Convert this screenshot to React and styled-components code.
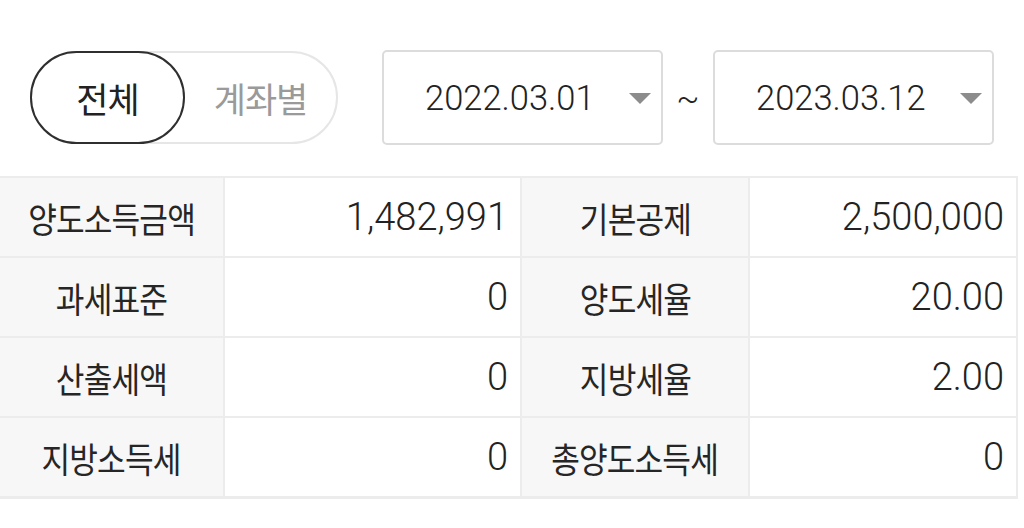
import React, { useState } from "react";
import styled, { createGlobalStyle } from "styled-components";

const Global = createGlobalStyle`
  html, body { margin: 0; padding: 0; background: #fff; }
  body { font-family: "Noto Sans CJK KR", "Noto Sans", sans-serif; color: #2b2b2b; }
  * { box-sizing: border-box; }
`;

const Page = styled.div`
  width: 1024px;
  height: 528px;
  background: #fff;
  padding-top: 50px;
`;

const TopBar = styled.div`
  display: flex;
  align-items: center;
  padding: 0 30px;
  height: 95px;
`;

const Toggle = styled.div`
  display: flex;
  width: 308px;
  height: 93px;
  border: 2px solid #e6e6e6;
  border-radius: 47px;
  margin-right: 44px;
`;

const ToggleItem = styled.button`
  flex: ${(p) => (p.$active ? "0 0 155px" : "1")};
  height: 93px;
  margin: -2px ${(p) => (p.$active ? "0" : "-2px")} -2px ${(p) => (p.$active ? "-2px" : "0")};
  border: ${(p) => (p.$active ? "2.5px solid #2f2f2f" : "none")};
  border-radius: 47px;
  background: ${(p) => (p.$active ? "#fff" : "transparent")};
  color: ${(p) => (p.$active ? "#222" : "#9a9a9a")};
  font-family: "Noto Sans CJK KR", sans-serif;
  font-size: 35px;
  font-weight: 400;
  padding: 0;
  padding-right: ${(p) => (p.$active ? "0" : "2px")};
  cursor: pointer;
  letter-spacing: -1px;
`;

const DateBox = styled.div`
  position: relative;
  width: 281px;
  height: 95px;
  border: 2px solid #dcdcdc;
  border-radius: 5px;
  display: flex;
  align-items: center;
  padding-left: 41px;
`;

const DateText = styled.span`
  font-family: "Roboto", sans-serif;
  font-size: 34.5px;
  font-weight: 300;
  color: #222;
`;

const Caret = styled.span`
  position: absolute;
  right: 10px;
  top: 41px;
  width: 0;
  height: 0;
  border-left: 11px solid transparent;
  border-right: 11px solid transparent;
  border-top: 11px solid #8c8c8c;
`;

const Tilde = styled.span`
  width: 50px;
  text-align: center;
  font-family: "Roboto", sans-serif;
  font-size: 34px;
  font-weight: 300;
  color: #222;
`;

const Table = styled.div`
  margin-top: 31px;
  width: 1018px;
  display: grid;
  grid-template-columns: 223px 295px 226px 266px;
  grid-auto-rows: 78px;
  gap: 2px;
  background: #ececec;
  padding: 2px 2px 3px 0;
`;

const LabelCell = styled.div`
  background: #f7f7f7;
  display: flex;
  align-items: center;
  justify-content: center;
  overflow: hidden;
`;

const LabelText = styled.span`
  display: inline-block;
  font-family: "Noto Sans CJK KR", sans-serif;
  font-size: 35px;
  color: #262626;
  letter-spacing: -1px;
  transform: scaleX(0.89);
  white-space: nowrap;
`;

const ValueCell = styled.div`
  background: #fff;
  display: flex;
  align-items: center;
  justify-content: flex-end;
  padding-right: 12px;
  font-family: "Roboto", sans-serif;
  font-size: 38px;
  font-weight: 300;
  color: #222;
`;

const rows = [
  ["양도소득금액", "1,482,991", "기본공제", "2,500,000"],
  ["과세표준", "0", "양도세율", "20.00"],
  ["산출세액", "0", "지방세율", "2.00"],
  ["지방소득세", "0", "총양도소득세", "0"],
];

export default function App() {
  const [mode, setMode] = useState("all");
  return (
    <Page>
      <Global />
      <TopBar>
        <Toggle>
          <ToggleItem $active={mode === "all"} onClick={() => setMode("all")}>전체</ToggleItem>
          <ToggleItem $active={mode === "acct"} onClick={() => setMode("acct")}>계좌별</ToggleItem>
        </Toggle>
        <DateBox>
          <DateText>2022.03.01</DateText>
          <Caret />
        </DateBox>
        <Tilde>~</Tilde>
        <DateBox>
          <DateText>2023.03.12</DateText>
          <Caret />
        </DateBox>
      </TopBar>
      <Table>
        {rows.map((r) => (
          <React.Fragment key={r[0]}>
            <LabelCell><LabelText>{r[0]}</LabelText></LabelCell>
            <ValueCell>{r[1]}</ValueCell>
            <LabelCell><LabelText>{r[2]}</LabelText></LabelCell>
            <ValueCell>{r[3]}</ValueCell>
          </React.Fragment>
        ))}
      </Table>
    </Page>
  );
}
